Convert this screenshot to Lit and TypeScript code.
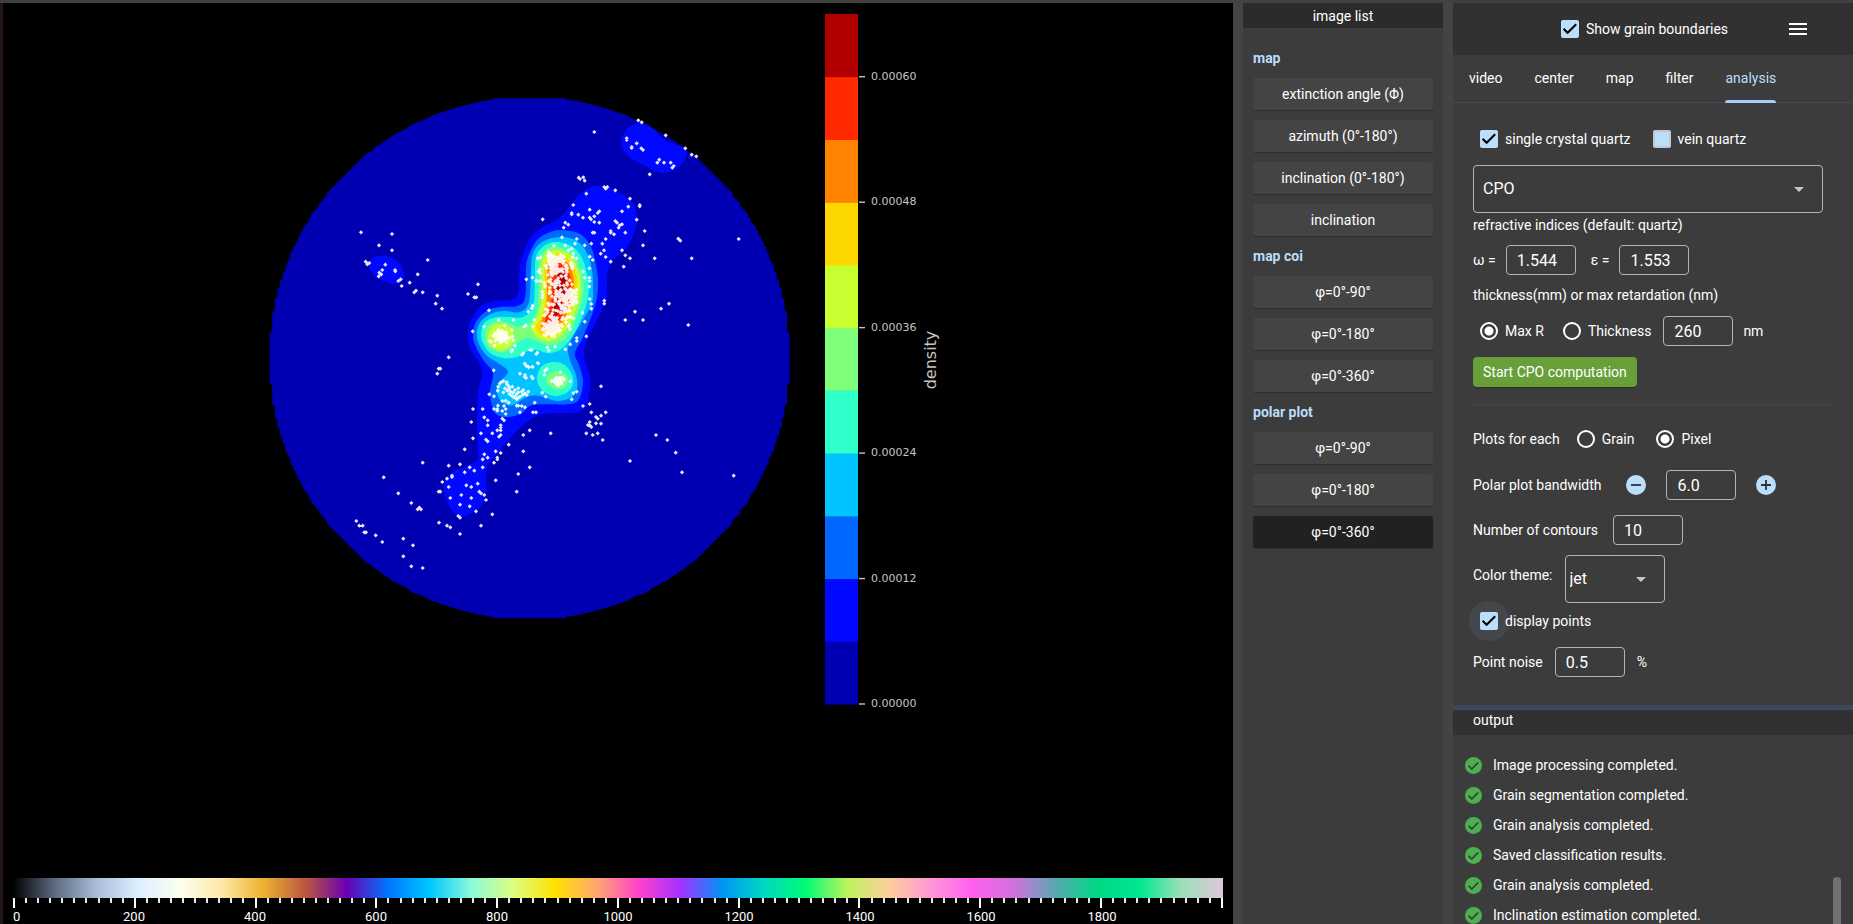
import { LitElement, html, svg, css } from "lit";
import { customElement, property, state } from "lit/decorators.js";
import { classMap } from "lit/directives/class-map.js";

type Pt = [number, number];

const JET = [
  "#0000b2", "#0008ff", "#0068ff", "#00c4ff", "#2fffc8", "#7dff7a",
  "#c8ff30", "#ffd700", "#ff8300", "#ff2a00", "#b20000",
];

const parse = (s: string): Pt[] =>
  s.trim().split(/\s+/).map((p) => p.split(",").map(Number) as Pt);

/** Closed Catmull-Rom spline through the given points. */
function smooth(points: string): string {
  const p = parse(points);
  const n = p.length;
  let d = `M${p[0][0]},${p[0][1]}`;
  for (let i = 0; i < n; i++) {
    const a = p[(i + n - 1) % n], b = p[i], c = p[(i + 1) % n], e = p[(i + 2) % n];
    d += `C${(b[0] + (c[0] - a[0]) / 6).toFixed(1)},${(b[1] + (c[1] - a[1]) / 6).toFixed(1)} `
      + `${(c[0] - (e[0] - b[0]) / 6).toFixed(1)},${(c[1] - (e[1] - b[1]) / 6).toFixed(1)} ${c[0]},${c[1]}`;
  }
  return d + "Z";
}

/** Disc rasterised on the sampling grid of the polar plot. */
function disc(cx: number, cy: number, r: number, cells: number): string {
  const step = (2 * r) / cells;
  const right: Pt[] = [];
  for (let k = 0; k < cells; k++) {
    const far = k < cells / 2 ? r - (k + 1) * step : k * step - r;
    const h = Math.round(Math.sqrt(Math.max(0, r * r - far ** 2)) / step) * step;
    right.push([h, k * step - r + step / 2]);
  }
  right.unshift([right[0][0], -r]);
  right.push([right[right.length - 1][0], r]);
  const all = [...right, ...right.slice().reverse().map(([x, y]) => [-x, y] as Pt)];
  return "M" + all.map(([x, y]) => `${(cx + x).toFixed(1)},${(cy + y).toFixed(1)}`).join("L") + "Z";
}

const CONTOURS: [number, string][] = [
  [1, "590,187 603,186 615,190 632,202 637,217 635,230 627,247 612,262 607,275 607,297 602,310 593,328 585,347 585,360 590,377 589,395 585,408 573,413 543,414 527,422 510,438 498,453 487,468 486,493 480,507 462,517 452,510 444,493 445,480 453,472 473,463 478,457 477,427 478,393 482,370 470,348 468,333 471,320 480,307 493,301 510,300 518,293 519,273 522,257 530,238 543,227 557,220 567,210 577,197"],
  [1, "628,128 621,142 627,155 647,167 663,173 678,168 686,157 686,152 680,146 665,140 652,128 640,123"],
  [1, "368,262 375,257 384,256 394,259 402,267 404,277 400,283 390,283 379,279 371,271"],
  [2, "563,230 580,234 590,245 595,260 598,280 597,297 593,312 583,337 575,353 579,365 583,380 580,397 570,404 533,405 522,413 508,417 495,413 490,393 493,373 484,361 475,345 473,333 477,320 488,310 500,307 517,306 525,298 526,270 528,257 537,240 550,232"],
  [3, "560,237 577,241 587,253 592,270 593,287 592,303 583,320 569,345 570,360 576,375 577,388 572,397 557,401 540,396 527,397 513,405 503,403 497,393 498,384 508,372 498,363 486,355 478,342 477,330 482,320 493,313 505,311 520,312 529,302 531,270 533,253 542,242"],
  [4, "558,242 573,247 583,260 588,280 588,297 582,317 572,337 560,350 547,353 537,350 528,351 517,357 503,358 490,353 483,343 481,333 485,322 497,317 510,317 523,317 533,307 535,280 536,257 545,245"],
  [4, "555,362 566,366 573,378 570,390 557,396 543,391 537,379 542,366"],
  [5, "557,247 570,252 578,263 583,280 583,295 578,313 567,337 550,345 537,341 527,338 517,343 509,350 499,352 488,346 485,335 489,325 500,321 518,326 530,323 537,310 539,280 539,260 547,249"],
  [5, "557,371 566,375 568,381 564,388 555,389 547,383 548,375"],
  [6, "557,250 570,255 578,270 581,287 578,303 570,323 558,338 547,341 535,335 532,325 538,315 542,297 542,263 547,253"],
  [6, "501,324 511,328 514,338 509,347 500,350 491,346 488,337 492,327"],
  [7, "555,254 567,258 575,270 577,287 573,305 565,325 553,337 541,335 536,327 543,313 545,297 545,265"],
  [8, "555,257 567,262 573,275 574,290 570,305 562,323 553,332 543,330 541,323 546,310 547,295 548,265"],
  [9, "557,262 566,267 571,280 570,295 565,310 558,323 550,327 545,322 549,308 552,295 551,275"],
  [10, "558,272 565,275 566,290 561,305 556,318 552,312 556,297"],
];

// Orientation samples, in thirds of a plot unit from each group's origin.
const SAMPLES: [number, number, string][] = [
  [250, 80, "333,457 426,462 387,496 426,511 347,545 352,553 358,549 406,554 397,570 388,578 394,583 386,589 435,570 436,574 533,540 503,583 452,598 445,603 479,608 455,618 498,632 493,637 518,637 562,647 557,671 576,686 684,613 654,642 673,652 679,652 717,691 878,418 829,598 668,754 703,740 596,832 746,720 790,720 785,813 795,797 823,740 827,736 848,677 845,685 835,695 863,535 872,532 870,568 866,575 858,603 873,603 877,635 878,645 895,515 853,720 848,740"],
  [540, 80, "163,156 295,121 305,127 377,166 436,205 455,224 469,229 260,175 260,180 290,190 275,201 275,204 304,205 309,210 358,239 352,248 372,248 392,248 401,258 397,263 329,283 596,477 116,293 120,297 130,292 134,302 193,321 202,321 197,326 226,331 139,341 270,356 265,380 299,375 299,379 246,394 290,419 100,375 95,399 95,403 115,404 129,413 149,389 178,394 173,399 163,409 149,413 153,418 163,426 178,428 8,418 76,428 85,434 71,443 226,423 231,428 246,433 239,436 236,443 212,453 212,458 222,463 256,458 314,453 309,496 415,476 421,482 455,535 344,535 158,458 163,458 66,472 110,477 105,491 134,496 154,491 187,491 197,477 192,511 182,521 197,531 212,545 246,511 256,526 270,535 251,560 149,530 158,540 148,565 193,662 193,671 154,672 154,686 149,657 387,671 363,686 285,695 256,720 309,720 445,735 134,725 139,769 110,774 110,783 91,793 76,808 22,802 27,812 42,497 76,497 85,511 95,506 100,520 110,535 129,575 148,593 149,603 148,620 134,593"],
  [340, 360, "301,26 296,26 292,41 461,31 554,11 560,18 566,22 578,21 593,9 540,41 558,53 554,51 578,55 621,26 615,32 613,45 661,36 691,64 607,98 617,110 710,95 700,99 695,118 729,138 749,132 783,79 754,157 797,157 768,171 773,176 783,167 749,186 744,195 749,196 754,201 768,190 783,191 739,220 758,225 773,220 788,240 632,220 550,225 569,211 550,274 569,322 535,342 530,395 467,361 457,463 423,497 360,522 321,497 331,502 297,488 355,468 360,473 408,454 389,439 360,434 394,414 364,405 331,414 438,420 433,405 423,400 418,395 394,381 379,376 413,371 301,395 296,395 326,381 307,366 321,356 336,347 336,351 326,317 360,313 374,337 389,322 403,332 428,322 428,298 433,283 443,293 462,308 472,293 472,298 467,274 482,279 506,254 374,268 248,308 131,352 175,400 214,429 233,448 238,443 243,448 49,483 58,497 68,497 73,517 78,517 107,526 127,546 190,536 219,556 190,589 214,619 248,624 399,147 428,147 394,186 399,235 433,172 443,181 443,196 423,220 438,239 443,244 457,220 472,211 482,196 482,202 482,211 482,225 477,230 487,176 492,181 497,162 462,147 472,147 472,152 487,153 497,147 474,137 492,138 487,123 497,122 506,128 530,137 535,137 545,138 555,142 540,157 579,157 588,157 584,128 448,103 462,109 521,112 530,118 535,113 948,225 982,240 1007,278 870,303 1026,337 1181,347"],
  [450, 220, "220,400 216,405 240,390 245,390 262,398 259,402 265,430 247,440 235,440 225,432 228,437 245,470 228,474 210,461 225,465 187,390 184,395 150,490 145,500 143,512 160,483 170,492 178,505 187,500 195,510 205,505 215,515 225,520 235,515 190,518 182,515 172,512 165,505 160,517 200,522 210,530 218,525 178,522 170,487 230,525 185,527 205,517 195,530 175,497 153,487 220,510"],
];

const CLUSTERS: [number, number, number, number, number][] = [
  [554, 262, 4, 5, 75],
  [562, 268, 7, 8, 28],
  [569, 296, 4, 6, 60],
  [559, 290, 7, 12, 60],
  [552, 328, 5, 4, 90],
  [558, 312, 8, 8, 40],
  [501, 336, 3, 3, 50],
  [501, 336, 6, 5, 24],
  [558, 381, 3, 2, 40],
  [558, 292, 12, 25, 28],
];

function samplePath(): string {
  const pts: Pt[] = [];
  for (const [ox, oy, s] of SAMPLES) {
    for (const [x, y] of parse(s)) pts.push([ox + x / 3, oy + y / 3]);
  }
  let seed = 20117;
  const rnd = () => (seed = (seed * 16807) % 2147483647) / 2147483647;
  for (const [cx, cy, sx, sy, n] of CLUSTERS) {
    for (let i = 0; i < n; i++) {
      const m = Math.min(2.2, Math.sqrt(-2 * Math.log(rnd())));
      const a = 2 * Math.PI * rnd();
      pts.push([cx + sx * m * Math.cos(a), cy + sy * m * Math.sin(a)]);
    }
  }
  return pts
    .map(([x, y]) => `M${(x - 2.1).toFixed(1)},${y.toFixed(1)}l2.1,-2.1 2.1,2.1 -2.1,2.1z`)
    .join("");
}

@customElement("polar-plot")
export class PolarPlot extends LitElement {
  static styles = css`
    :host { display: block; min-height: 0; }
    .plot { display: block; width: 100%; height: 100%; }
    .tick { font: 11px "DejaVu Sans", sans-serif; fill: #c4c4c4; }
    .axis { font: 16px "DejaVu Sans", sans-serif; fill: #c4c4c4; }
  `;

  render() {
    const top = 14, bottom = 704, n = JET.length, h = (bottom - top) / n;
    return html`
      <svg class="plot" viewBox="3 3 1230 875" preserveAspectRatio="xMidYMin meet" role="img" aria-label="Polar density plot">
        <path d=${disc(529.6, 358.2, 260, 200)} fill=${JET[0]}></path>
        ${CONTOURS.map(([l, p]) => svg`<path d=${smooth(p)} fill=${JET[l]}></path>`)}
        <path d=${samplePath()} fill="#fff" fill-opacity=".9"></path>
        ${JET.map((c, i) => svg`<rect x="825" y=${bottom - (i + 1) * h} width="33" height=${h + 0.5} fill=${c}></rect>`)}
        ${[0, 12, 24, 36, 48, 60].map((v) => {
          const y = bottom - (v / 6) * h;
          return svg`
            <path d="M859,${y}h6" stroke="#c4c4c4" stroke-width="1.4"></path>
            <text class="tick" x="871" y=${y + 3}>0.000${String(v).padStart(2, "0")}</text>`;
        })}
        <text class="axis" transform="translate(936 360) rotate(-90)" text-anchor="middle">density</text>
      </svg>`;
  }
}

@customElement("retardation-scale")
export class RetardationScale extends LitElement {
  static styles = css`
    :host { display: block; padding: 0 10px; color: #fff; }
    .band {
      height: 20px;
      background: linear-gradient(to right,
        #000000, #5c6b80, #a9bcd9, #ddeeff, #fbfff0, #ffe9a8, #ecb22f, #bc5840, #6a00b4, #0076ff,
        #00c8ff, #8dfadb, #dcff80, #ffe100, #ffa673, #ff42cc, #a530ff, #0095f5, #00d8c0, #00fb75,
        #bdf45c, #fdcf9a, #ff96d8, #ff60f0, #cf72de, #58a9ae, #00d884, #00e890, #9be0b8, #e0c6d8);
    }
    .ticks { display: flex; justify-content: space-between; height: 10px; }
    .tick { width: 2px; height: 5px; background: #e8e8e8; }
    .major { height: 10px; background: #fff; }
    .labels { display: grid; grid-template-columns: repeat(10, 1fr); font-size: 13px; line-height: 18px; }
    .label { display: flex; justify-content: center; width: 0; height: 16px; }
    .label:first-child { justify-content: flex-start; }
  `;

  render() {
    return html`
      <div class="band"></div>
      <div class="ticks">
        ${Array.from({ length: 101 }, (_, i) => html`<span class=${classMap({ tick: true, major: i % 10 === 0 })}></span>`)}
      </div>
      <div class="labels">
        ${Array.from({ length: 10 }, (_, i) => html`<span class="label">${i * 200}</span>`)}
      </div>`;
  }
}

const IMAGE_GROUPS = [
  { title: "map", items: ["extinction angle (Φ)", "azimuth (0°-180°)", "inclination (0°-180°)", "inclination"] },
  { title: "map coi", items: ["φ=0°-90°", "φ=0°-180°", "φ=0°-360°"] },
  { title: "polar plot", items: ["φ=0°-90°", "φ=0°-180°", "φ=0°-360°"] },
];

@customElement("image-list")
export class ImageList extends LitElement {
  @state() private selected = "polar plot/φ=0°-360°";

  static styles = css`
    :host { display: block; background: #3c3c3c; }
    .title { margin: 0; background: #2b2b2b; text-align: center; font-size: 14px; font-weight: 400; line-height: 26px; height: 25px; }
    .list { display: flex; flex-direction: column; gap: 10px; padding: 20px 10px; }
    .group { margin: 0; font-size: 14px; line-height: 20px; font-weight: 700; color: #bbdefb; }
    .item {
      height: 32px; padding: 0; border: 0; border-radius: 2px; background: #444; color: #fff;
      font: inherit; box-shadow: 0 1px 1px #00000038; cursor: pointer;
    }
    .item.selected { background: #212121; }
  `;

  render() {
    return html`
      <h2 class="title">image list</h2>
      <div class="list">
        ${IMAGE_GROUPS.map((g) => html`
          <h3 class="group">${g.title}</h3>
          ${g.items.map((t) => {
            const key = `${g.title}/${t}`;
            return html`<button class=${classMap({ item: true, selected: key === this.selected })}
              @click=${() => (this.selected = key)}>${t}</button>`;
          })}`)}
      </div>`;
  }
}

const controls = css`
  .choice { display: flex; align-items: center; cursor: pointer; }
  .mark {
    appearance: none; flex: none; display: grid; place-items: center;
    width: 18px; height: 18px; margin: 7px; cursor: pointer;
  }
  .box { border-radius: 2px; background: #bbdefb; border: 2px solid #c3c7cf; }
  .box:checked {
    border: 0;
    background: #bbdefb url('data:image/svg+xml,<svg xmlns="http://www.w3.org/2000/svg" viewBox="0 0 18 18"><path d="M2.6 8.8l4 4 8.6-8.6" fill="none" stroke="black" stroke-width="2"/></svg>');
  }
  .dot { border: 2px solid #fff; border-radius: 50%; }
  .dot:checked { background: radial-gradient(circle, #fff 0 4px, transparent 5px); }
`;

@customElement("analysis-panel")
export class AnalysisPanel extends LitElement {
  static styles = [controls, css`
    :host { display: flex; flex-direction: column; gap: 10px; padding: 20px 20px 28px; }
    .row { display: flex; align-items: center; gap: 10px; }
    .row > .choice { margin-right: 2px; }
    .row > .wider { margin-right: 5px; }
    .tall { height: 32px; }
    .pair { display: flex; flex-direction: column; gap: 2px; }
    .caption { line-height: 20px; }
    .value {
      box-sizing: border-box; width: 70px; height: 30px; padding: 0 10px; margin: 0;
      border: 1px solid #b4b4b4; border-radius: 4px; background: transparent; color: #fff;
      font: inherit; font-size: 16px;
    }
    .gap { margin-right: 5px; }
    .select { display: grid; align-items: center; }
    .select > * { grid-area: 1 / 1; }
    .wide { width: 100%; max-width: 350px; }
    .field {
      appearance: none; box-sizing: border-box; height: 48px; width: 100%; padding: 0 9px;
      border: 1px solid #b4b4b4; border-radius: 4px; background: transparent; color: #fff;
      font: inherit; font-size: 16px;
    }
    .narrow { width: 100px; }
    .narrow .field { padding: 0 4px; }
    .arrow { width: 10px; height: 5px; margin-right: 19px; justify-self: end; fill: #c3c7cf; pointer-events: none; }
    .start { align-items: flex-start; gap: 12px; }
    .start .caption { line-height: 40px; }
    .noise { gap: 12px; }
    .run {
      align-self: flex-start; height: 30px; padding: 0 10px; border: 0; border-radius: 4px;
      background: #689f38; color: #fff; font: inherit; box-shadow: 0 1px 1px #00000050;
    }
    .rule { width: 100%; height: 2px; margin: 7px 0; border: 0; background: #3f4048; }
    .step { width: 40px; height: 40px; padding: 10px; border: 0; background: none; }
    .glyph { display: block; width: 20px; height: 20px; }
    .display { position: relative; isolation: isolate; align-self: flex-start; }
    .display::before {
      content: ""; position: absolute; z-index: -1; left: -4px; top: -4px;
      width: 40px; height: 40px; border-radius: 50%; background: #44484d;
    }
  `];

  private arrow = html`<svg class="arrow" viewBox="0 0 10 5"><path d="M0 0h10L5 5z"></path></svg>`;

  private step(label: string, d: string) {
    return html`<button class="step" aria-label=${label}>
      <svg class="glyph" viewBox="0 0 20 20"><circle cx="10" cy="10" r="10" fill="#bbdefb"></circle>
      <path d=${d} fill="none" stroke="#2f3338" stroke-width="1.8"></path></svg></button>`;
  }

  render() {
    return html`
      <div class="row">
        <label class="choice wider"><input class="mark box" type="checkbox" checked />single crystal quartz</label>
        <label class="choice"><input class="mark box" type="checkbox" />vein quartz</label>
      </div>
      <div class="pair">
        <div class="select wide">
          <select class="field" aria-label="analysis type"><option>CPO</option></select>${this.arrow}
        </div>
        <span class="caption">refractive indices (default: quartz)</span>
      </div>
      <div class="row">
        <label for="omega">ω =</label><input id="omega" class="value gap" value="1.544" />
        <label for="epsilon">ε =</label><input id="epsilon" class="value" value="1.553" />
      </div>
      <span class="caption">thickness(mm) or max retardation (nm)</span>
      <div class="row tall">
        <label class="choice"><input class="mark dot" type="radio" name="mode" checked />Max R</label>
        <label class="choice"><input class="mark dot" type="radio" name="mode" />Thickness</label>
        <input id="retardation" class="value" value="260" aria-label="max retardation" />
        <label for="retardation">nm</label>
      </div>
      <button class="run">Start CPO computation</button>
      <hr class="rule" />
      <div class="row">
        <span>Plots for each</span>
        <label class="choice wider"><input class="mark dot" type="radio" name="unit" />Grain</label>
        <label class="choice"><input class="mark dot" type="radio" name="unit" checked />Pixel</label>
      </div>
      <div class="row">
        <label class="gap" for="bandwidth">Polar plot bandwidth</label>
        ${this.step("decrease", "M5 10h10")}
        <input id="bandwidth" class="value" value="6.0" />
        ${this.step("increase", "M5 10h10M10 5v10")}
      </div>
      <div class="row">
        <label class="gap" for="contours">Number of contours</label><input id="contours" class="value" value="10" />
      </div>
      <div class="pair">
        <div class="row start">
          <label class="caption" for="theme">Color theme:</label>
          <div class="select narrow">
            <select id="theme" class="field"><option>jet</option></select>${this.arrow}
          </div>
        </div>
        <label class="choice display"><input class="mark box" type="checkbox" checked />display points</label>
      </div>
      <div class="row noise">
        <label for="noise">Point noise</label><input id="noise" class="value" value="0.5" /><span>%</span>
      </div>`;
  }
}

@customElement("output-log")
export class OutputLog extends LitElement {
  @property({ attribute: false }) lines: string[] = [];

  static styles = css`
    :host { display: block; position: relative; min-height: 0; overflow: hidden; border-top: 5px solid #3b4859; }
    .title { margin: 0; padding: 0 20px 4px; background: #313131; font-size: 14px; font-weight: 400; line-height: 21px; }
    .lines { margin: 0; padding: 15px 12px; list-style: none; }
    .line { display: flex; align-items: center; gap: 11px; height: 30px; }
    .ok { width: 17px; height: 17px; flex: none; }
    .thumb { position: absolute; right: 12px; bottom: 0; width: 8px; height: 47px; border-radius: 4px 4px 0 0; background: #6f6f74; }
  `;

  render() {
    return html`
      <h2 class="title">output</h2>
      <ul class="lines">
        ${this.lines.map((l) => html`<li class="line">
          <svg class="ok" viewBox="0 0 17 17"><circle cx="8.5" cy="8.5" r="8.5" fill="#4caf50"></circle>
          <path d="M3.6 8.8l3.2 3.2 6.4-6.6" fill="none" stroke="#353535" stroke-width="1.5"></path></svg>${l}</li>`)}
      </ul>
      <div class="thumb"></div>`;
  }
}

@customElement("app-root")
export class AppRoot extends LitElement {
  @state() private tab = "analysis";

  static styles = [controls, css`
    :host {
      display: grid; grid-template-columns: minmax(0, 1fr) 200px 400px; column-gap: 10px;
      box-sizing: border-box; height: 100vh; overflow: hidden; border-top: 3px solid #414141;
      background: #444; color: #fff; font: 14px/20px Roboto, sans-serif;
    }
    .view {
      display: flex; flex-direction: column; min-height: 0; min-width: 0;
      border-left: 3px solid #22161c; background: #000;
    }
    .plot { flex: 1; }
    .side { display: flex; flex-direction: column; min-height: 0; background: #3c3c3c; }
    .head {
      display: grid; grid-template-columns: 1fr auto 1fr; align-items: center;
      height: 52px; padding-right: 24px; background: #313131;
    }
    .boundaries { grid-column: 2; }
    .menu { justify-self: end; width: 48px; height: 48px; margin-right: 7px; padding: 0; border: 0; background: none; }
    .bars { display: block; width: 18px; height: 12px; margin: auto; fill: #fff; }
    .tabs { display: flex; height: 48px; box-sizing: border-box; border-bottom: 1px solid #3f4b57; }
    .tab {
      position: relative; height: 48px; padding: 0 16px 2px; border: 0; background: none;
      color: #fff; font: inherit;
    }
    .tab.active { color: #bbdefb; }
    .tab.active::after {
      content: ""; position: absolute; left: 16px; right: 16px; bottom: 0; height: 3px;
      border-radius: 3px 3px 0 0; background: #a5cdfb;
    }
    .log { flex: 1; }
  `];

  render() {
    return html`
      <main class="view">
        <polar-plot class="plot"></polar-plot>
        <retardation-scale></retardation-scale>
      </main>
      <image-list></image-list>
      <aside class="side">
        <header class="head">
          <label class="choice boundaries"><input class="mark box" type="checkbox" checked />Show grain boundaries</label>
          <button class="menu" aria-label="menu">
            <svg class="bars" viewBox="0 0 18 12"><path d="M0 0h18v2H0zM0 5h18v2H0zM0 10h18v2H0z"></path></svg>
          </button>
        </header>
        <nav class="tabs">
          ${["video", "center", "map", "filter", "analysis"].map((t) => html`
            <button class=${classMap({ tab: true, active: t === this.tab })} @click=${() => (this.tab = t)}>${t}</button>`)}
        </nav>
        <analysis-panel></analysis-panel>
        <output-log class="log" .lines=${[
          "Image processing completed.",
          "Grain segmentation completed.",
          "Grain analysis completed.",
          "Saved classification results.",
          "Grain analysis completed.",
          "Inclination estimation completed.",
        ]}></output-log>
      </aside>`;
  }
}
